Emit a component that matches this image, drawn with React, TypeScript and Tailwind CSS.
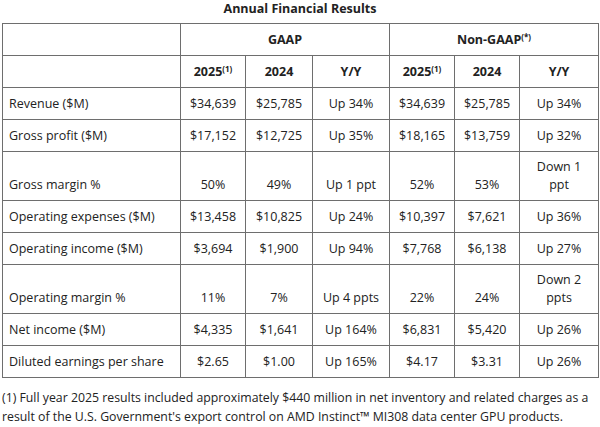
const rows: { label: string; cells: string[][]; tall?: boolean }[] = [
  { label: "Revenue ($M)", cells: [["$34,639"], ["$25,785"], ["Up 34%"], ["$34,639"], ["$25,785"], ["Up 34%"]] },
  { label: "Gross profit ($M)", cells: [["$17,152"], ["$12,725"], ["Up 35%"], ["$18,165"], ["$13,759"], ["Up 32%"]] },
  { label: "Gross margin %", cells: [["50%"], ["49%"], ["Up 1 ppt"], ["52%"], ["53%"], ["Down 1", "ppt"]], tall: true },
  { label: "Operating expenses ($M)", cells: [["$13,458"], ["$10,825"], ["Up 24%"], ["$10,397"], ["$7,621"], ["Up 36%"]] },
  { label: "Operating income ($M)", cells: [["$3,694"], ["$1,900"], ["Up 94%"], ["$7,768"], ["$6,138"], ["Up 27%"]] },
  { label: "Operating margin %", cells: [["11%"], ["7%"], ["Up 4 ppts"], ["22%"], ["24%"], ["Down 2", "ppts"]], tall: true },
  { label: "Net income ($M)", cells: [["$4,335"], ["$1,641"], ["Up 164%"], ["$6,831"], ["$5,420"], ["Up 26%"]] },
  { label: "Diluted earnings per share", cells: [["$2.65"], ["$1.00"], ["Up 165%"], ["$4.17"], ["$3.31"], ["Up 26%"]] },
];

const cell = "border border-[#6e6e6e] px-[6px] py-[6px] leading-[18px]";

function Sup({ children }: { children: string }) {
  return <sup className="text-[8px] font-bold">{children}</sup>;
}

export default function App() {
  return (
    <div className="w-[600px] h-[427px] bg-white text-[#222] text-[12.5px] px-[2px]" style={{ fontFamily: '"Open Sans", sans-serif' }}>
      <div className="text-center font-bold leading-[18px] pb-[5px]">Annual Financial Results</div>
      <table className="w-[596px] border-collapse table-fixed">
        <colgroup>
          <col className="w-[178px]" />
          <col className="w-[65px]" />
          <col className="w-[67px]" />
          <col className="w-[77px]" />
          <col className="w-[65px]" />
          <col className="w-[65px]" />
          <col className="w-[79px]" />
        </colgroup>
        <thead>
          <tr className="h-[32px]">
            <th className={cell}></th>
            <th colSpan={3} className={`${cell} text-center font-bold`}>GAAP</th>
            <th colSpan={3} className={`${cell} text-center font-bold`}>
              Non-GAAP<Sup>(*)</Sup>
            </th>
          </tr>
          <tr className="h-[32px]">
            <th className={cell}></th>
            <th className={`${cell} text-center font-bold`}>2025<Sup>(1)</Sup></th>
            <th className={`${cell} text-center font-bold`}>2024</th>
            <th className={`${cell} text-center font-bold`}>Y/Y</th>
            <th className={`${cell} text-center font-bold`}>2025<Sup>(1)</Sup></th>
            <th className={`${cell} text-center font-bold`}>2024</th>
            <th className={`${cell} text-center font-bold`}>Y/Y</th>
          </tr>
        </thead>
        <tbody>
          {rows.map((r) => (
            <tr key={r.label} className={r.tall ? "h-[49px]" : "h-[32px]"}>
              <td className={`${cell} ${r.tall ? "align-bottom" : ""}`}>{r.label}</td>
              {r.cells.map((c, i) => (
                <td key={i} className={`${cell} text-center ${r.tall && c.length === 1 ? "align-bottom" : ""}`}>
                  {c.map((line, j) => (
                    <div key={j}>{line}</div>
                  ))}
                </td>
              ))}
            </tr>
          ))}
        </tbody>
      </table>
      <p className="mt-[10px] leading-[19px] text-[12.3px]">
        (1) Full year 2025 results included approximately $440 million in net inventory and related charges as a
        result of the U.S. Government's export control on AMD Instinct™ MI308 data center GPU products.
      </p>
    </div>
  );
}
